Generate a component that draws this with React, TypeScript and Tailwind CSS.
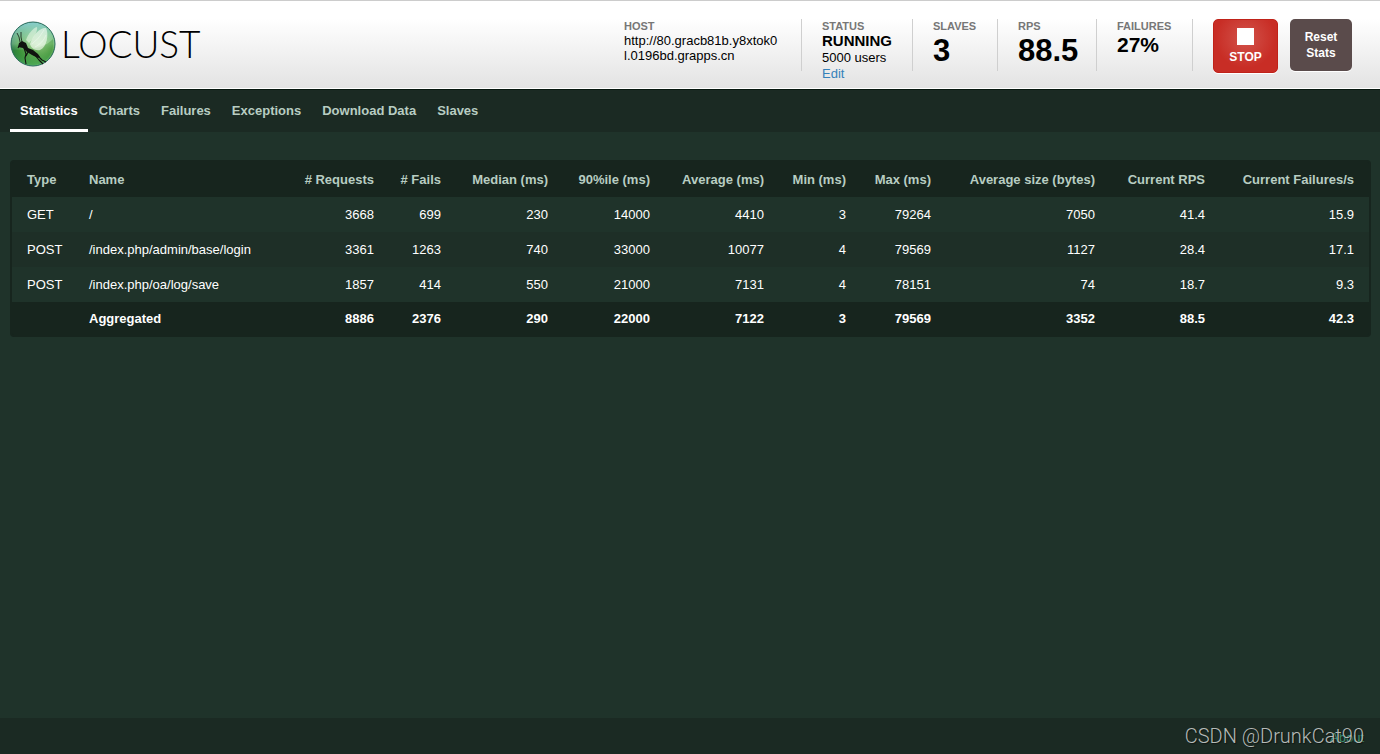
import type { ReactNode } from "react";

const tabs = ["Statistics", "Charts", "Failures", "Exceptions", "Download Data", "Slaves"];

const columns = [
  { label: "Type", width: "w-[65px]" },
  { label: "Name", width: "w-[213px]" },
  { label: "# Requests", width: "w-[96px]" },
  { label: "# Fails", width: "w-[67px]" },
  { label: "Median (ms)", width: "w-[107px]" },
  { label: "90%ile (ms)", width: "w-[102px]" },
  { label: "Average (ms)", width: "w-[114px]" },
  { label: "Min (ms)", width: "w-[82px]" },
  { label: "Max (ms)", width: "w-[85px]" },
  { label: "Average size (bytes)", width: "w-[164px]" },
  { label: "Current RPS", width: "w-[110px]" },
  { label: "Current Failures/s", width: "w-[152px]" },
];

const rows = [
  ["GET", "/", "3668", "699", "230", "14000", "4410", "3", "79264", "7050", "41.4", "15.9"],
  ["POST", "/index.php/admin/base/login", "3361", "1263", "740", "33000", "10077", "4", "79569", "1127", "28.4", "17.1"],
  ["POST", "/index.php/oa/log/save", "1857", "414", "550", "21000", "7131", "4", "78151", "74", "18.7", "9.3"],
];

const total = ["", "Aggregated", "8886", "2376", "290", "22000", "7122", "3", "79569", "3352", "88.5", "42.3"];

const cell = "px-3 first:pl-[15px] last:pr-[15px]";

function align(index: number) {
  return index < 2 ? "text-left" : "text-right";
}

function Logo() {
  return (
    <a href="/" className="flex items-center gap-[5px] text-black" aria-label="Locust">
      <svg viewBox="0 0 46 46" className="size-[46px]" aria-hidden="true">
        <defs>
          <radialGradient id="ball" cx="0.62" cy="0.5" r="0.62">
            <stop offset="0" stopColor="#c8e8b8" />
            <stop offset="0.4" stopColor="#86c274" />
            <stop offset="0.75" stopColor="#489a48" />
            <stop offset="1" stopColor="#2a7452" />
          </radialGradient>
          <linearGradient id="sky" x1="0" y1="0" x2="0" y2="1">
            <stop offset="0" stopColor="#8ed4dd" stopOpacity="0.9" />
            <stop offset="0.5" stopColor="#a5dcae" stopOpacity="0.4" />
            <stop offset="0.65" stopColor="#2e8c2e" stopOpacity="0.15" />
            <stop offset="1" stopColor="#7ad894" stopOpacity="0.6" />
          </linearGradient>
        </defs>
        <circle cx="23" cy="23" r="22" fill="url(#ball)" />
        <circle cx="23" cy="23" r="22" fill="url(#sky)" stroke="#2b6b5d" strokeWidth="1" />
        <path d="M2 29C12 28 30 31 43 18C45 33 35 44 23 44C12 44 4 37 2 29Z" fill="#24821d" opacity="0.3" />
        <path d="M16 19C18 13 23 7 27 6C28 10 24 17 19 22Z" fill="#e8f7e4" opacity="0.6" />
        <path d="M20 23C23 13 31 6 36 7C39 13 37 26 30 29C25 30 21 27 20 23Z" fill="#f2fbef" opacity="0.65" />
        <path d="M22 23Q30 17 34 9M25 26Q33 22 36 14" fill="none" stroke="#fff" strokeWidth="0.6" opacity="0.6" />
        <path d="M8 26L9 22L12 20L16 22L18 27L23 29L28 33L30 36L28 37L22 34L17 31L13 27Z" fill="#10130f" />
        <path d="M10 21L9 16L7 12M12 21L11 16L11 11" fill="none" stroke="#151a14" strokeWidth="0.8" />
        <path d="M14 27L16 33L15 37L16 43M18 31L16 35M24 33L29 39L33 43M26 33L32 39L36 41M9 25L8 27" fill="none" stroke="#10130f" strokeWidth="1.1" strokeLinejoin="round" />
      </svg>
      <span className="font-[Lato,sans-serif] text-[37px] leading-[44px] font-light">LOCUST</span>
    </a>
  );
}

function Stat({ label, className, children }: { label: string; className: string; children: ReactNode }) {
  return (
    <div className={"h-[52px] shrink-0 border-r border-[#cfcfcf] " + className}>
      <div className="text-[11px] leading-[14px] font-bold text-[#777777]">{label}</div>
      {children}
    </div>
  );
}

export default function App() {
  return (
    <div className="flex min-h-screen flex-col bg-[#1f332a] font-['Liberation_Sans',Arial,sans-serif] text-[13px] text-white">
      <header className="flex h-[89px] items-start justify-between border-t border-b border-t-[#cccccc] border-b-white bg-linear-to-b from-white from-20% to-[#e3e3e3] pr-7 pl-[10px] text-black">
        <div className="pt-5">
          <Logo />
        </div>
        <div className="flex items-start pt-[18px]">
          <Stat label="HOST" className="w-[178px]">
            <div className="leading-[15px]">
              http://80.gracb81b.y8xtok0
              <br />
              l.0196bd.grapps.cn
            </div>
          </Stat>
          <Stat label="STATUS" className="w-[111px] pl-5">
            <div className="text-[15px] leading-4 font-bold">RUNNING</div>
            <div className="leading-[17px]">5000 users</div>
            <a href="#edit" className="block leading-[15px] text-[#3581b9]">
              Edit
            </a>
          </Stat>
          <Stat label="SLAVES" className="w-[85px] pl-5">
            <div className="text-[31px] leading-[35px] font-bold">3</div>
          </Stat>
          <Stat label="RPS" className="w-[99px] pl-5">
            <div className="text-[31px] leading-[35px] font-bold">88.5</div>
          </Stat>
          <Stat label="FAILURES" className="w-24 pl-5">
            <div className="text-[21px] leading-[23px] font-bold">27%</div>
          </Stat>
          <button
            type="button"
            className="ml-5 flex h-[54px] w-[65px] flex-col items-center rounded-[5px] border border-[#c02219] bg-[radial-gradient(circle_at_50%_35%,#d2534b_0%,#c82d25_65%)] pt-2 text-[12px] leading-4 font-bold text-white shadow-[0_1px_0_#ffffff]"
          >
            <span className="mb-1 size-[17px] bg-white" />
            STOP
          </button>
          <button
            type="button"
            className="ml-3 h-[52px] w-[62px] rounded-[5px] bg-[#5a4b4b] px-2 text-[12px] leading-4 font-bold text-white shadow-[0_1px_0_#ffffff]"
          >
            Reset Stats
          </button>
        </div>
      </header>

      <nav className="flex h-[43px] items-stretch gap-px border-t border-[#07170f] bg-[#1b2a23] px-[10px] font-bold">
        {tabs.map((tab, i) => (
          <a
            key={tab}
            href={"#" + tab.toLowerCase().replace(" ", "-")}
            className={
              "border-b-[3px] px-[10px] pt-[13px] leading-4 " +
              (i === 0 ? "border-white text-white" : "border-transparent text-[#b8cdc2]")
            }
          >
            {tab}
          </a>
        ))}
      </nav>

      <main className="grow overflow-x-auto px-[10px] pt-7 pr-[9px]">
        <div className="rounded-[4px] border-2 border-[#17251e] bg-[#17251e]">
          <table className="w-full table-fixed border-collapse">
            <thead>
              <tr className="h-[35px] text-[#b8cdc2]">
                {columns.map((column, i) => (
                  <th key={column.label} scope="col" className={`${cell} ${column.width} ${align(i)} whitespace-nowrap`}>
                    {column.label}
                  </th>
                ))}
              </tr>
            </thead>
            <tbody>
              {rows.map((row) => (
                <tr key={row[1]} className="h-[35px] bg-[#1f332a] even:bg-[#1e2f27]">
                  {row.map((value, i) => (
                    <td key={columns[i].label} className={`${cell} ${align(i)}`}>
                      {value}
                    </td>
                  ))}
                </tr>
              ))}
            </tbody>
            <tfoot>
              <tr className="h-[33px] font-bold">
                {total.map((value, i) => (
                  <td key={columns[i].label} className={`${cell} ${align(i)}`}>
                    {value}
                  </td>
                ))}
              </tr>
            </tfoot>
          </table>
        </div>
      </main>

      <footer className="relative flex h-9 items-center justify-end bg-[#1b2a23] pt-1 pr-4">
        <a href="#about" className="text-[#3f8f73]">
          About
        </a>
        <span className="absolute right-4 bottom-1 font-[Roboto,sans-serif] text-[20px] leading-7 font-light whitespace-nowrap text-[#b5bab7] [text-shadow:1px_1px_1px_#00000080]">
          CSDN @DrunkCat90
        </span>
      </footer>
    </div>
  );
}
